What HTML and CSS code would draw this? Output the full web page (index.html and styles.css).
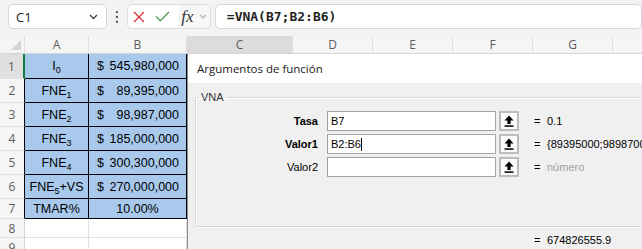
FILE: index.html
```html
<!DOCTYPE html>
<html>
  <head>
    <meta charset="utf-8">
    <link rel="stylesheet" href="styles.css">
  </head>
  <body>
    <div class="app">
      <div class="topbar">
        <div class="namebox">
          <span>C1</span>
          <svg width="9" height="6" viewBox="0 0 9 6"><path d="M1 1l3.5 3.5L8 1" fill="none" stroke="#424242" stroke-width="1.3"/></svg>
        </div>
        <svg class="dots" width="4" height="14" viewBox="0 0 4 14"><circle cx="2" cy="2" r="1.2"/><circle cx="2" cy="7" r="1.2"/><circle cx="2" cy="12" r="1.2"/></svg>
        <div class="fxbox">
          <svg class="cancel" width="12" height="12" viewBox="0 0 12 12"><path d="M1 1l10 10M11 1L1 11" fill="none" stroke="#d13438" stroke-width="1.3"/></svg>
          <svg class="enter" width="15" height="11" viewBox="0 0 15 11"><path d="M1 5.5l4.3 4.3L14 1" fill="none" stroke="#4f9d5e" stroke-width="1.3"/></svg>
          <div class="fx">
            <span>fx</span>
            <svg width="8" height="5" viewBox="0 0 8 5"><path d="M1 1l3 3 3-3" fill="none" stroke="#b3b3b3" stroke-width="1.2"/></svg>
          </div>
        </div>
        <div class="formula">=VNA(B7;B2:B6)</div>
      </div>

      <div class="sheet">
        <div class="row head">
          <div class="c corner"><svg width="10" height="10" viewBox="0 0 10 10"><path d="M10 0V10H0Z" fill="#d4d4d4"/></svg></div>
          <div class="c ch">A</div>
          <div class="c ch">B</div>
          <div class="c ch sel">C</div>
          <div class="c ch">D</div>
          <div class="c ch">E</div>
          <div class="c ch">F</div>
          <div class="c ch">G</div>
          <div class="c ch"></div>
        </div>
        <div class="row r1">
          <div class="c rh edge active">1</div>
          <div class="c blue mid"><span>I<sub>0</sub></span></div>
          <div class="c blue money"><span>$</span><span>545,980,000</span></div>
          <div class="c"></div><div class="c"></div><div class="c"></div><div class="c"></div><div class="c"></div><div class="c"></div>
        </div>
        <div class="row r2">
          <div class="c rh edge">2</div>
          <div class="c blue mid"><span>FNE<sub>1</sub></span></div>
          <div class="c blue money"><span>$</span><span>89,395,000</span></div>
          <div class="c"></div><div class="c"></div><div class="c"></div><div class="c"></div><div class="c"></div><div class="c"></div>
        </div>
        <div class="row r2">
          <div class="c rh edge">3</div>
          <div class="c blue mid"><span>FNE<sub>2</sub></span></div>
          <div class="c blue money"><span>$</span><span>98,987,000</span></div>
          <div class="c"></div><div class="c"></div><div class="c"></div><div class="c"></div><div class="c"></div><div class="c"></div>
        </div>
        <div class="row r2">
          <div class="c rh edge">4</div>
          <div class="c blue mid"><span>FNE<sub>3</sub></span></div>
          <div class="c blue money"><span>$</span><span>185,000,000</span></div>
          <div class="c"></div><div class="c"></div><div class="c"></div><div class="c"></div><div class="c"></div><div class="c"></div>
        </div>
        <div class="row r2">
          <div class="c rh edge">5</div>
          <div class="c blue mid"><span>FNE<sub>4</sub></span></div>
          <div class="c blue money"><span>$</span><span>300,300,000</span></div>
          <div class="c"></div><div class="c"></div><div class="c"></div><div class="c"></div><div class="c"></div><div class="c"></div>
        </div>
        <div class="row r2">
          <div class="c rh edge">6</div>
          <div class="c blue mid"><span>FNE<sub>5</sub>+VS</span></div>
          <div class="c blue money"><span>$</span><span>270,000,000</span></div>
          <div class="c"></div><div class="c"></div><div class="c"></div><div class="c"></div><div class="c"></div><div class="c"></div>
        </div>
        <div class="row r7">
          <div class="c rh edge">7</div>
          <div class="c blue mid">TMAR%</div>
          <div class="c blue mid">10.00%</div>
          <div class="c"></div><div class="c"></div><div class="c"></div><div class="c"></div><div class="c"></div><div class="c"></div>
        </div>
        <div class="row r8">
          <div class="c rh">8</div>
          <div class="c"></div><div class="c"></div>
          <div class="c"></div><div class="c"></div><div class="c"></div><div class="c"></div><div class="c"></div><div class="c"></div>
        </div>
        <div class="row r7">
          <div class="c rh">9</div>
          <div class="c"></div><div class="c"></div>
          <div class="c"></div><div class="c"></div><div class="c"></div><div class="c"></div><div class="c"></div><div class="c"></div>
        </div>
      </div>

      <div class="dialog">
        <div class="dlg-title">Argumentos de función</div>
        <div class="dlg-body">
          <fieldset class="group">
            <legend>VNA</legend>
            <div class="arg">
              <label class="bold">Tasa</label>
              <div class="inp">B7</div>
              <div class="btn"><svg width="10" height="12" viewBox="0 0 10 12"><path d="M5 0.5L9.5 5.5H6.6V9H3.4V5.5H0.5Z" fill="#000"/><rect x="0.5" y="10.3" width="9" height="1.5" fill="#000"/></svg></div>
              <span class="eq">=</span>
              <span class="val">0.1</span>
            </div>
            <div class="arg">
              <label class="bold">Valor1</label>
              <div class="inp">B2:B6<span class="caret"></span></div>
              <div class="btn"><svg width="10" height="12" viewBox="0 0 10 12"><path d="M5 0.5L9.5 5.5H6.6V9H3.4V5.5H0.5Z" fill="#000"/><rect x="0.5" y="10.3" width="9" height="1.5" fill="#000"/></svg></div>
              <span class="eq">=</span>
              <span class="val">{89395000;98987000;185000000;300300000;270000000}</span>
            </div>
            <div class="arg">
              <label>Valor2</label>
              <div class="inp"></div>
              <div class="btn"><svg width="10" height="12" viewBox="0 0 10 12"><path d="M5 0.5L9.5 5.5H6.6V9H3.4V5.5H0.5Z" fill="#000"/><rect x="0.5" y="10.3" width="9" height="1.5" fill="#000"/></svg></div>
              <span class="eq">=</span>
              <span class="val hint">número</span>
            </div>
          </fieldset>
          <div class="result">
            <span class="eq">=</span>
            <span class="val">674826555.9</span>
          </div>
        </div>
      </div>
    </div>
  </body>
</html>
```

FILE: styles.css
```css
body {
  margin: 0;
  width: 642px;
  height: 249px;
  overflow: hidden;
  background: #ffffff;
  font-family: 'Open Sans', 'Noto Sans', sans-serif;
}
.app {
  position: relative;
  width: 642px;
  height: 249px;
  overflow: hidden;
}

/* formula bar */
.topbar {
  height: 36px;
  box-sizing: border-box;
  display: flex;
  align-items: flex-start;
  padding: 4px 0 0 8px;
  background: #f3f3f3;
}
.namebox {
  width: 102px;
  height: 25px;
  box-sizing: border-box;
  border: 1px solid #d6d6d6;
  border-radius: 5px;
  background: #ffffff;
  display: flex;
  align-items: center;
  justify-content: space-between;
  padding: 0 8px 0 7px;
  font-size: 13px;
  color: #242424;
}
.dots {
  fill: #505050;
  margin: 6px 0 0 8px;
}
.fxbox {
  width: 86px;
  height: 25px;
  margin-left: 8px;
  box-sizing: border-box;
  border: 1px solid #dcdcdc;
  border-radius: 5px;
  background: #ffffff;
  display: flex;
  align-items: center;
  overflow: hidden;
}
.cancel {
  margin-left: 5px;
}
.enter {
  margin-left: 10px;
}
.fx {
  margin-left: 8px;
  height: 100%;
  flex: 1;
  display: flex;
  align-items: center;
  background: #f7f7f7;
  padding-left: 3px;
}
.fx span {
  font-family: 'Liberation Serif', serif;
  font-style: italic;
  font-size: 17px;
  color: #333333;
  margin-right: 5px;
}
.formula {
  width: 440px;
  height: 25px;
  margin-left: 4px;
  box-sizing: border-box;
  border: 1px solid #d6d6d6;
  border-radius: 5px;
  background: #ffffff;
  padding-left: 11px;
  line-height: 23px;
  font-family: 'DejaVu Sans Mono', monospace;
  font-weight: bold;
  font-size: 13px;
  color: #1f1f1f;
}

/* grid */
.row {
  display: grid;
  grid-template-columns: 25px 64px 98px 106px 80px 80px 80px 80px 60px;
}
.head { height: 18px; }
.r1 { height: 25px; }
.r2 { height: 24px; }
.r7 { height: 20px; }
.r8 { height: 19px; }
.c {
  box-sizing: border-box;
  border-right: 1px solid #e1e1e1;
  border-bottom: 1px solid #e1e1e1;
  display: flex;
  align-items: center;
  font-family: 'Liberation Sans', sans-serif;
  font-size: 12.5px;
  color: #000000;
  background: #ffffff;
}
.head .c {
  background: #f5f5f5;
  border-bottom: 1px solid #d4d4d4;
  border-right-color: #dedede;
}
.corner {
  justify-content: flex-end;
  align-items: flex-end;
  padding: 0 3px 3px 0;
}
.ch {
  justify-content: center;
  font-family: 'Open Sans', sans-serif;
  font-size: 12px;
  color: #5c5c5c;
}
.head .sel {
  background: #dcdcdc;
}
.rh {
  justify-content: center;
  background: #f5f5f5;
  color: #5c5c5c;
  font-family: 'Open Sans', sans-serif;
  font-size: 12px;
  border-right-color: #d4d4d4;
}
.rh.edge { border-right-color: #000000; }
.rh.active {
  background: #e0e0e0;
  border-right: 2px solid #107c41;
}
.blue {
  background: #a8c9ec;
  border-right-color: #000000;
  border-bottom-color: #000000;
}
.mid { justify-content: center; }
.money {
  justify-content: space-between;
  padding: 0 7px 0 8px;
}
sub {
  font-size: 9px;
  vertical-align: -3px;
  line-height: 0;
}

/* dialog */
.dialog {
  position: absolute;
  left: 187px;
  top: 54px;
  width: 470px;
  height: 200px;
  background: #f0f0f0;
  border-left: 1px solid #8c8c8c;
  font-family: 'Liberation Sans', sans-serif;
  font-size: 11px;
  color: #000000;
}
.dlg-title {
  height: 29px;
  line-height: 29px;
  padding-left: 9px;
  background: #ffffff;
  font-family: 'Open Sans', sans-serif;
  font-size: 11.5px;
  color: #1a1a1a;
}
.dlg-body {
  padding: 8px 0 0 7px;
}
.group {
  margin: 0;
  padding: 7px 0 46px 0;
  border: 1px solid #d9d9d9;
  box-shadow: inset 1px 1px 0 #ffffff, 1px 1px 0 #ffffff;
}
.group legend {
  margin-left: 3px;
  padding: 0 2px;
  font-size: 11px;
  line-height: 13px;
  color: #333333;
}
.arg {
  display: flex;
  align-items: center;
  height: 20px;
  margin-bottom: 3px;
}
.arg label {
  width: 122px;
  margin-right: 9px;
  text-align: right;
}
.bold { font-weight: bold; }
.inp {
  width: 169px;
  height: 20px;
  box-sizing: border-box;
  border: 1px solid #a3a3a3;
  background: #ffffff;
  padding-left: 3px;
  line-height: 18px;
  display: flex;
  align-items: center;
}
.caret {
  display: inline-block;
  width: 1px;
  height: 13px;
  background: #000000;
}
.btn {
  width: 20px;
  height: 20px;
  margin-left: 3px;
  box-sizing: border-box;
  border: 2px solid #bdbdbd;
  background: #fbfbfb;
  display: flex;
  align-items: center;
  justify-content: center;
}
.eq {
  margin-left: 15px;
  width: 13px;
}
.val {
  white-space: nowrap;
}
.hint { color: #a0a0a0; }
.result {
  display: flex;
  align-items: center;
  height: 14px;
  margin-top: 6px;
  padding-left: 324px;
}
```
